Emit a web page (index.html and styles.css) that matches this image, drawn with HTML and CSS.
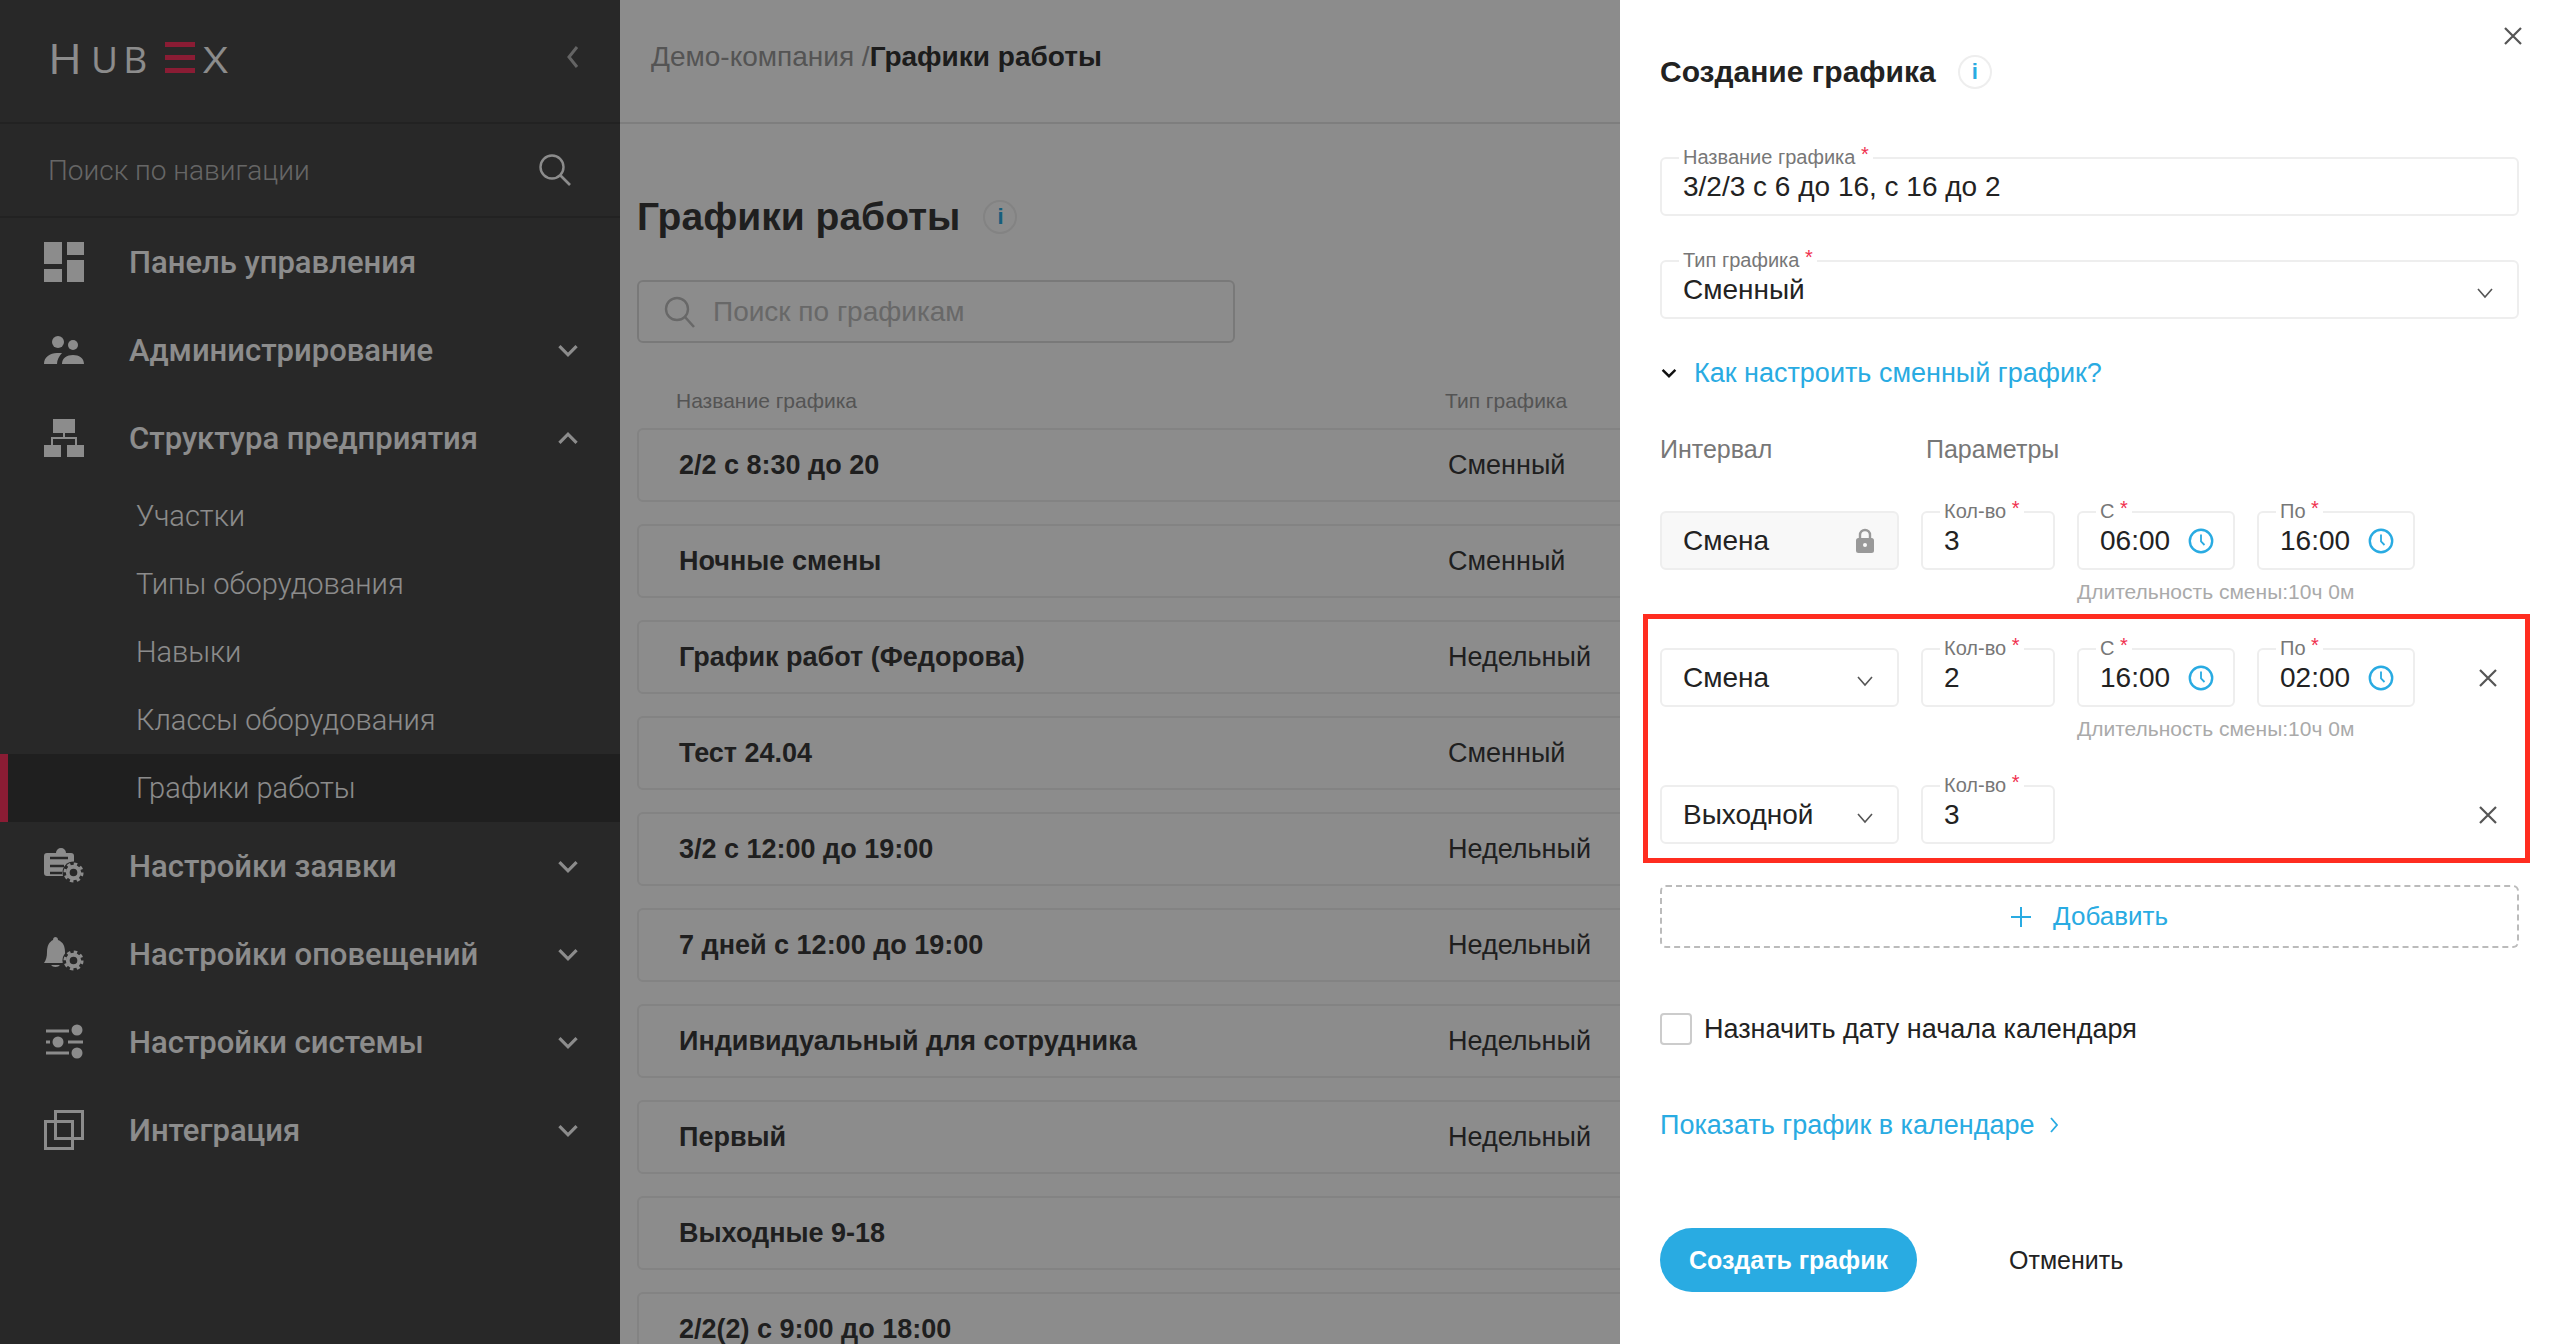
FILE: index.html
```html
<!DOCTYPE html>
<html lang="ru">
<head>
    <meta charset="UTF-8">
    <title>Графики работы</title>
    <link rel="stylesheet" href="styles.css">
</head>
<body>
    <svg class="defs" width="0" height="0">
        <symbol id="gear" viewBox="0 0 24 24">
            <circle cx="12" cy="12" r="11.5" fill="#494949"/>
            <circle cx="12" cy="12" r="6" fill="none" stroke="#fff" stroke-width="4"/>
            <circle cx="12" cy="12" r="9" fill="none" stroke="#fff" stroke-width="3" stroke-dasharray="3.6 3.47"/>
        </symbol>
        <symbol id="chev-down" viewBox="0 0 20 14">
            <path d="M2 3l8 8 8-8" fill="none" stroke="currentColor" stroke-width="3"/>
        </symbol>
        <symbol id="chev-thin" viewBox="0 0 16 12">
            <path d="M1 2l7 8 7-8" fill="none" stroke="currentColor" stroke-width="1.6"/>
        </symbol>
        <symbol id="clock" viewBox="0 0 26 26">
            <circle cx="13" cy="13" r="11.2" fill="none" stroke="currentColor" stroke-width="2.4"/>
            <path d="M13 6.5v7l3.5 3.5" fill="none" stroke="currentColor" stroke-width="1.8"/>
        </symbol>
        <symbol id="cross" viewBox="0 0 20 20">
            <path d="M2 2l16 16M18 2L2 18" fill="none" stroke="currentColor" stroke-width="2.2"/>
        </symbol>
    </svg>

    <aside class="sidebar">
        <div class="side-head">
            <div class="logo">
                <span class="logo-h">H</span><span class="logo-ub">UB</span>
                <span class="logo-e"><i></i><i></i><i></i></span>
                <span class="logo-x">X</span>
            </div>
            <svg class="collapse" width="14" height="24" viewBox="0 0 14 24"><path d="M11 2L3 12l8 10" fill="none" stroke="currentColor" stroke-width="3"/></svg>
        </div>
        <div class="side-search">
            <span>Поиск по навигации</span>
            <svg width="34" height="34" viewBox="0 0 34 34"><circle cx="14" cy="14" r="11.5" fill="none" stroke="currentColor" stroke-width="2.4"/><path d="M22 22l10 10" stroke="currentColor" stroke-width="2.6"/></svg>
        </div>
        <nav>
            <div class="nav-item">
                <svg class="nav-icon" viewBox="0 0 40 40"><path d="M0 0h18v22H0zM0 27h18v13H0zM23 0h17v13H23zM23 18h17v22H23z" fill="#fff"/></svg>
                <span>Панель управления</span>
            </div>
            <div class="nav-item">
                <svg class="nav-icon" viewBox="0 0 40 40"><circle cx="14" cy="12" r="6" fill="#fff"/><circle cx="29" cy="15" r="5" fill="#fff"/><path d="M0 34c0-7 6-11 13-11h5c-3 3-5 7-5 11zM18 34c0-6 5-9 11-9s11 3 11 9z" fill="#fff"/></svg>
                <span>Администрирование</span>
                <svg class="nav-chev"><use href="#chev-down"/></svg>
            </div>
            <div class="nav-item">
                <svg class="nav-icon" viewBox="0 0 40 40"><path d="M9 1h22v14H9zM0 27h17v12H0zM23 27h17v12H23z" fill="#fff"/><path d="M20 15v5M8 27v-7h24v7" fill="none" stroke="#fff" stroke-width="2"/></svg>
                <span>Структура предприятия</span>
                <svg class="nav-chev flip"><use href="#chev-down"/></svg>
            </div>
            <div class="nav-sub">Участки</div>
            <div class="nav-sub">Типы оборудования</div>
            <div class="nav-sub">Навыки</div>
            <div class="nav-sub">Классы оборудования</div>
            <div class="nav-sub active">Графики работы</div>
            <div class="nav-item">
                <svg class="nav-icon" viewBox="0 0 40 40"><path d="M3 7h9a5 5 0 0 1 10 0h5a3 3 0 0 1 3 3v20H3a3 3 0 0 1-3-3V10a3 3 0 0 1 3-3z" fill="#fff"/><path d="M6 12h18M6 20h14M6 27h12" stroke="#494949" stroke-width="2.4"/><use href="#gear" x="18" y="15" width="23" height="23"/></svg>
                <span>Настройки заявки</span>
                <svg class="nav-chev"><use href="#chev-down"/></svg>
            </div>
            <div class="nav-item">
                <svg class="nav-icon" viewBox="0 0 40 40"><path d="M11 3a3 3 0 0 1 3 3c5 2 7 6 7 12 0 5 2 8 3 11H0c2-3 3-6 3-11 0-6 2-10 6-12a3 3 0 0 1 2-3z" fill="#fff"/><path d="M7 31h9a5 3.500 0 0 1-9 0z" fill="#fff"/><use href="#gear" x="18" y="15" width="23" height="23"/></svg>
                <span>Настройки оповещений</span>
                <svg class="nav-chev"><use href="#chev-down"/></svg>
            </div>
            <div class="nav-item">
                <svg class="nav-icon" viewBox="0 0 40 40"><path d="M2 9h23M2 20h4M24 20h15M2 31h23" stroke="#fff" stroke-width="3"/><circle cx="33" cy="8" r="5.500" fill="#fff"/><circle cx="14" cy="20" r="5.500" fill="#fff"/><circle cx="33" cy="31" r="5.500" fill="#fff"/></svg>
                <span>Настройки системы</span>
                <svg class="nav-chev"><use href="#chev-down"/></svg>
            </div>
            <div class="nav-item">
                <svg class="nav-icon" viewBox="0 0 40 40"><path d="M11.500 1.500h27v27h-27zM1.500 11.500h27v27h-27z" fill="none" stroke="#fff" stroke-width="3"/></svg>
                <span>Интеграция</span>
                <svg class="nav-chev"><use href="#chev-down"/></svg>
            </div>
        </nav>
    </aside>

    <main class="main">
        <div class="topbar">Демо-компания /<b>Графики работы</b></div>
        <div class="content">
            <div class="page-title">
                <h1>Графики работы</h1>
                <span class="info">i</span>
            </div>
            <div class="list-search">
                <svg width="32" height="32" viewBox="0 0 32 32"><circle cx="13" cy="13" r="11" fill="none" stroke="currentColor" stroke-width="2.4"/><path d="M21 21l9 10" stroke="currentColor" stroke-width="2.6"/></svg>
                <span>Поиск по графикам</span>
            </div>
            <div class="list-head"><span class="col-name">Название графика</span><span>Тип графика</span></div>
            <div class="list">
                <div class="list-row"><b class="col-name">2/2 с 8:30 до 20</b><span>Сменный</span></div>
                <div class="list-row"><b class="col-name">Ночные смены</b><span>Сменный</span></div>
                <div class="list-row"><b class="col-name">График работ (Федорова)</b><span>Недельный</span></div>
                <div class="list-row"><b class="col-name">Тест 24.04</b><span>Сменный</span></div>
                <div class="list-row"><b class="col-name">3/2 с 12:00 до 19:00</b><span>Недельный</span></div>
                <div class="list-row"><b class="col-name">7 дней с 12:00 до 19:00</b><span>Недельный</span></div>
                <div class="list-row"><b class="col-name">Индивидуальный для сотрудника</b><span>Недельный</span></div>
                <div class="list-row"><b class="col-name">Первый</b><span>Недельный</span></div>
                <div class="list-row"><b class="col-name">Выходные 9-18</b><span></span></div>
                <div class="list-row"><b class="col-name">2/2(2) с 9:00 до 18:00</b><span></span></div>
            </div>
        </div>
    </main>

    <div class="scrim"></div>

    <section class="panel">
        <svg class="panel-close"><use href="#cross"/></svg>
        <div class="panel-title">
            <h2>Создание графика</h2>
            <span class="info">i</span>
        </div>

        <div class="field wide first">
            <label>Название графика <em>*</em></label>
            <span class="value">3/2/3 с 6 до 16, с 16 до 2</span>
        </div>
        <div class="field wide second">
            <label>Тип графика <em>*</em></label>
            <span class="value">Сменный</span>
            <svg class="field-chev"><use href="#chev-thin"/></svg>
        </div>

        <div class="howto">
            <svg width="16" height="12"><use href="#chev-down"/></svg>
            <span>Как настроить сменный график?</span>
        </div>

        <div class="col-heads"><span class="head-interval">Интервал</span><span>Параметры</span></div>

        <div class="shift-row">
            <div class="field locked">
                <span class="value">Смена</span>
                <svg class="lock" width="20" height="26" viewBox="0 0 20 26"><path d="M5 11V7a5 5 0 0 1 10 0v4" fill="none" stroke="currentColor" stroke-width="2.400"/><rect x="1" y="10" width="18" height="15" rx="2.500" fill="currentColor"/><circle cx="10" cy="17" r="2" fill="#f8f8f8"/></svg>
            </div>
            <div class="field"><label>Кол-во <em>*</em></label><span class="value">3</span></div>
            <div class="field time"><label>С <em>*</em></label><span class="value">06:00</span><svg class="clock"><use href="#clock"/></svg></div>
            <div class="field time"><label>По <em>*</em></label><span class="value">16:00</span><svg class="clock"><use href="#clock"/></svg></div>
            <div class="duration">Длительность смены:10ч 0м</div>
        </div>

        <div class="highlight">
            <div class="shift-row">
                <div class="field"><span class="value">Смена</span><svg class="field-chev"><use href="#chev-thin"/></svg></div>
                <div class="field"><label>Кол-во <em>*</em></label><span class="value">2</span></div>
                <div class="field time"><label>С <em>*</em></label><span class="value">16:00</span><svg class="clock"><use href="#clock"/></svg></div>
                <div class="field time"><label>По <em>*</em></label><span class="value">02:00</span><svg class="clock"><use href="#clock"/></svg></div>
                <svg class="row-remove"><use href="#cross"/></svg>
                <div class="duration">Длительность смены:10ч 0м</div>
            </div>
            <div class="shift-row last">
                <div class="field"><span class="value">Выходной</span><svg class="field-chev"><use href="#chev-thin"/></svg></div>
                <div class="field"><label>Кол-во <em>*</em></label><span class="value">3</span></div>
                <svg class="row-remove"><use href="#cross"/></svg>
            </div>
        </div>

        <div class="add-row">
            <svg width="20" height="20" viewBox="0 0 20 20"><path d="M10 0v20M0 10h20" stroke="currentColor" stroke-width="2"/></svg>
            <span>Добавить</span>
        </div>

        <div class="check-row"><span class="checkbox"></span><span>Назначить дату начала календаря</span></div>

        <div class="calendar-link">
            <span>Показать график в календаре</span>
            <svg width="10" height="16" viewBox="0 0 10 16"><path d="M2 1l6 7-6 7" fill="none" stroke="currentColor" stroke-width="1.800"/></svg>
        </div>

        <div class="panel-actions">
            <span class="btn-primary">Создать график</span>
            <span class="btn-cancel">Отменить</span>
        </div>
    </section>
</body>
</html>
```

FILE: styles.css
```css
* {
    box-sizing: border-box;
}

html, body {
    height: 100%;
}

body {
    margin: 0;
    display: flex;
    overflow: hidden;
    position: relative;
    font-family: "Liberation Sans", Arial, sans-serif;
    background-color: #fff;
    color: #222;
}

.defs {
    position: absolute;
}

/* sidebar */
.sidebar {
    width: 620px;
    flex-shrink: 0;
    background-color: #494949;
    color: #fff;
    font-family: Roboto, sans-serif;
}

.side-head {
    height: 124px;
    padding: 0 40px 8px 48px;
    display: flex;
    align-items: center;
    justify-content: space-between;
    border-bottom: 2px solid #3e3e3e;
}

.logo {
    display: flex;
    align-items: flex-end;
    height: 31px;
    font-family: "Open Sans", sans-serif;
    color: #fff;
    line-height: 26px;
}

.logo-h {
    font-size: 42px;
    line-height: 31px;
    width: 43px;
    transform: scaleX(1.1);
    transform-origin: left;
}

.logo-ub {
    font-size: 36px;
    width: 74px;
    letter-spacing: 5px;
    transform: scaleX(1.03);
    transform-origin: left;
}

.logo-e {
    width: 30px;
    height: 31px;
    margin-right: 8px;
    display: flex;
    flex-direction: column;
    justify-content: space-between;
}

.logo-e i {
    height: 5px;
    background-color: #fb335f;
}

.logo-x {
    font-size: 36px;
    transform: scaleX(1.2);
    transform-origin: left;
}

.collapse {
    opacity: 0.6;
}

.side-search {
    height: 94px;
    padding: 0 48px 0 48px;
    display: flex;
    align-items: center;
    justify-content: space-between;
    border-bottom: 2px solid #3e3e3e;
    font-size: 28px;
    font-weight: 300;
    color: #bbb;
}

.side-search svg {
    color: #fff;
}

.nav-item {
    height: 88px;
    padding: 0 41px 0 44px;
    display: flex;
    align-items: center;
    font-size: 31px;
    font-weight: 500;
}

.nav-icon {
    width: 40px;
    height: 40px;
    margin-right: 45px;
    flex-shrink: 0;
}

.nav-chev {
    width: 22px;
    height: 15px;
    margin-left: auto;
}

.flip {
    transform: rotate(180deg);
}

.nav-sub {
    height: 68px;
    padding-left: 136px;
    display: flex;
    align-items: center;
    font-size: 29px;
    font-weight: 300;
}

.nav-sub.active {
    background-color: #3a3a3a;
    border-left: 8px solid #fb335f;
    padding-left: 128px;
}

/* page behind the panel */
.main {
    flex: 1;
    min-width: 0;
}

.topbar {
    height: 124px;
    padding: 0 0 8px 31px;
    display: flex;
    align-items: center;
    border-bottom: 2px solid #e6e6e6;
    font-size: 28px;
    color: #999;
}

.topbar b {
    color: #333;
}

.content {
    padding-left: 17px;
}

.page-title {
    height: 44px;
    margin-top: 71px;
    display: flex;
    align-items: center;
    gap: 23px;
}

h1 {
    margin: 0;
    font-size: 39px;
    color: #3a3a3a;
}

.info {
    width: 34px;
    height: 34px;
    border: 2px solid #eee;
    border-radius: 50%;
    display: flex;
    align-items: center;
    justify-content: center;
    font-weight: 700;
    font-size: 22px;
    color: #29abe2;
}

.list-search {
    width: 598px;
    height: 63px;
    margin-top: 41px;
    padding-left: 25px;
    display: flex;
    align-items: center;
    gap: 17px;
    border: 2px solid #ddd;
    border-radius: 6px;
    font-size: 28px;
    color: #bdbdbd;
}

.list-head {
    height: 24px;
    margin-top: 46px;
    padding-left: 39px;
    display: flex;
    font-size: 21px;
    color: #999;
}

.col-name {
    width: 769px;
    flex-shrink: 0;
}

.list {
    margin-top: 15px;
    display: flex;
    flex-direction: column;
    gap: 22px;
}

.list-row {
    height: 74px;
    padding-left: 40px;
    display: flex;
    align-items: center;
    border: 2px solid #eee;
    border-radius: 6px;
    margin-right: -40px;
    font-size: 27px;
    color: #3a3a3a;
}

/* darkens everything behind the drawer */
.scrim {
    position: absolute;
    inset: 0;
    background-color: rgba(0, 0, 0, 0.45);
}

/* drawer */
.panel {
    position: absolute;
    top: 0;
    right: 0;
    bottom: 0;
    width: 934px;
    padding: 50px 35px 0 40px;
    background-color: #fff;
}

.panel-close {
    position: absolute;
    top: 26px;
    right: 31px;
    width: 20px;
    height: 20px;
    color: #555;
}

.panel-title {
    height: 44px;
    display: flex;
    align-items: center;
    gap: 22px;
}

h2 {
    margin: 0;
    font-size: 30px;
}

.field {
    position: relative;
    height: 59px;
    padding-left: 21px;
    display: flex;
    align-items: center;
    border: 2px solid #eee;
    border-radius: 6px;
    font-size: 28px;
}

.field label {
    position: absolute;
    top: -14px;
    left: 17px;
    padding: 0 4px;
    background-color: #fff;
    font-size: 20px;
    line-height: 24px;
    color: #777;
}

.field em {
    font-style: normal;
    color: #f0304f;
    position: relative;
    top: -3px;
}

.field.first {
    margin-top: 63px;
}

.field.second {
    margin-top: 44px;
}

.field-chev {
    position: absolute;
    top: 25px;
    right: 24px;
    width: 16px;
    height: 12px;
    color: #555;
}

.field.locked {
    background-color: #f8f8f8;
}

.lock {
    position: absolute;
    top: 15px;
    right: 22px;
    color: #999;
}

.clock {
    position: absolute;
    top: 15px;
    right: 19px;
    width: 26px;
    height: 26px;
    color: #29abe2;
}

.howto {
    height: 32px;
    margin-top: 38px;
    padding-left: 1px;
    display: flex;
    align-items: center;
    gap: 17px;
    font-size: 27px;
    color: #29abe2;
}

.howto svg {
    color: #111;
}

.col-heads {
    height: 30px;
    margin-top: 45px;
    display: flex;
    font-size: 25px;
    line-height: 30px;
    color: #777;
}

.head-interval {
    width: 266px;
}

.shift-row {
    height: 137px;
    display: grid;
    grid-template-columns: 239px 134px 158px 158px 1fr;
    grid-template-rows: 59px 24px;
    column-gap: 22px;
    row-gap: 10px;
    align-content: start;
}

.col-heads + .shift-row {
    margin-top: 47px;
}

.shift-row.last {
    height: 59px;
}

.duration {
    grid-column: 3 / 6;
    grid-row: 2;
    font-size: 21px;
    line-height: 24px;
    color: #aaa;
}

.row-remove {
    grid-column: 5;
    grid-row: 1;
    justify-self: end;
    align-self: center;
    width: 20px;
    height: 20px;
    margin-right: 21px;
    color: #555;
}

/* red annotation round the added rows */
.highlight {
    margin: -34px -11px 0 -17px;
    padding: 29px 6px 14px 12px;
    border: 5px solid #ff2d20;
}

.add-row {
    height: 63px;
    margin-top: 22px;
    display: flex;
    align-items: center;
    justify-content: center;
    gap: 22px;
    border: 2px dashed #bbb;
    border-radius: 6px;
    font-size: 26px;
    color: #29abe2;
}

.check-row {
    height: 32px;
    margin-top: 65px;
    display: flex;
    align-items: center;
    gap: 12px;
    font-size: 27px;
}

.checkbox {
    width: 32px;
    height: 32px;
    border: 2px solid #ccc;
    border-radius: 4px;
}

.calendar-link {
    height: 32px;
    margin-top: 64px;
    display: flex;
    align-items: center;
    gap: 14px;
    font-size: 27px;
    color: #29abe2;
}

.panel-actions {
    margin-top: 87px;
    display: flex;
    align-items: center;
}

.btn-primary {
    width: 257px;
    height: 64px;
    display: flex;
    align-items: center;
    justify-content: center;
    border-radius: 32px;
    background-color: #29abe2;
    color: #fff;
    font-weight: 700;
    font-size: 25px;
}

.btn-cancel {
    margin-left: 92px;
    font-size: 25px;
}
```
